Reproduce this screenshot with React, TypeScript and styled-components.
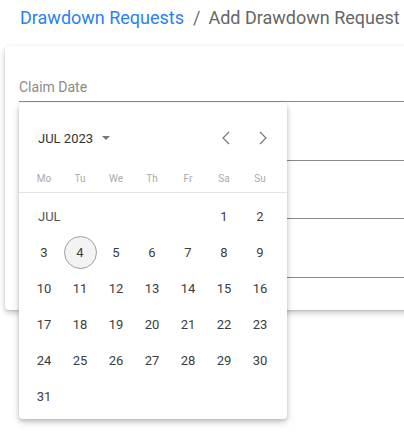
import React from 'react'
import styled, { createGlobalStyle } from 'styled-components'

const GlobalStyle = createGlobalStyle`
  html, body {
    margin: 0;
    padding: 0;
    background: #fff;
    overflow: hidden;
    font-family: Roboto, "Liberation Sans", sans-serif;
  }
`

const WEEKDAYS = ['Mo', 'Tu', 'We', 'Th', 'Fr', 'Sa', 'Su']

// July 2023 starts on a Saturday, so the month label fills Mo–Fr of week one
const DAYS = Array.from({ length: 31 }, (_, i) => i + 1)

function Chevron({ dir }: { dir: 'left' | 'right' }) {
  return (
    <svg width="8" height="14" viewBox="0 0 8 14">
      <polyline
        points={dir === 'left' ? '7,1 1,7 7,13' : '1,1 7,7 1,13'}
        fill="none"
        stroke="#777"
        strokeWidth="1.2"
      />
    </svg>
  )
}

function App() {
  return (
    <Page>
      <GlobalStyle />
      <Breadcrumb>
        <Crumb>Drawdown Requests</Crumb>
        <Sep>/</Sep>
        <Current>Add Drawdown Request</Current>
      </Breadcrumb>

      <Card>
        <Fields>
          <Field>
            <Label>Claim Date</Label>
          </Field>
          <Field />
          <Field />
          <Field />
        </Fields>

        <Picker>
          <PickerHeader>
            <MonthSwitch>
              JUL 2023
              <Caret />
            </MonthSwitch>
            <Nav>
              <NavButton>
                <Chevron dir="left" />
              </NavButton>
              <NavButton>
                <Chevron dir="right" />
              </NavButton>
            </Nav>
          </PickerHeader>

          <WeekRow>
            {WEEKDAYS.map((w) => (
              <WeekDay key={w}>{w}</WeekDay>
            ))}
          </WeekRow>

          <DayGrid>
            <MonthLabel>JUL</MonthLabel>
            {DAYS.map((d) => (
              <DayCell key={d}>
                <Day selected={d === 4}>{d}</Day>
              </DayCell>
            ))}
          </DayGrid>
        </Picker>
      </Card>
    </Page>
  )
}

const Page = styled.div`
  width: 404px;
  height: 435px;
  overflow: hidden;
`

const Breadcrumb = styled.div`
  display: flex;
  align-items: baseline;
  padding: 6px 0 0 20px;
  font-size: 18px;
  line-height: 24px;
  white-space: nowrap;
`

const Crumb = styled.span`
  color: #2b7ff5;
`

const Sep = styled.span`
  color: #707070;
  margin: 0 8px 0 9px;
`

const Current = styled.span`
  color: #666;
`

const Card = styled.div`
  position: relative;
  margin: 16px 0 0 5px;
  width: 600px;
  box-sizing: border-box;
  padding: 16px 0 32px 14px;
  background: #fff;
  border-radius: 4px;
  box-shadow: 0 3px 6px rgba(0, 0, 0, 0.2), 0 1px 3px rgba(0, 0, 0, 0.12);
`

const Fields = styled.div`
  display: flex;
  flex-direction: column;
  gap: 18.7px;
`

const Field = styled.div`
  height: 40px;
  box-sizing: border-box;
  display: flex;
  align-items: flex-end;
  padding-bottom: 6px;
  border-bottom: 1px solid #8a8a8a;
`

const Label = styled.span`
  font-size: 14px;
  line-height: 16px;
  color: #8a8a8a;
`

const Picker = styled.div`
  position: absolute;
  left: 14px;
  top: 57px;
  width: 268px;
  height: 316px;
  box-sizing: border-box;
  background: #fff;
  border-radius: 4px;
  box-shadow: 0 2px 4px rgba(0, 0, 0, 0.2), 0 4px 10px rgba(0, 0, 0, 0.12);
  padding-top: 17px;
`

const PickerHeader = styled.div`
  display: flex;
  align-items: center;
  justify-content: space-between;
  height: 36px;
  padding: 0 6px 0 19px;
`

const MonthSwitch = styled.div`
  display: flex;
  align-items: center;
  font-size: 13px;
  color: #333;
`

const Caret = styled.span`
  width: 0;
  height: 0;
  margin-left: 9px;
  border-left: 4px solid transparent;
  border-right: 4px solid transparent;
  border-top: 4px solid #777;
`

const Nav = styled.div`
  display: flex;
`

const NavButton = styled.div`
  width: 37px;
  height: 36px;
  display: flex;
  align-items: center;
  justify-content: center;
`

const WeekRow = styled.div`
  display: grid;
  grid-template-columns: repeat(7, 36px);
  height: 28px;
  margin-top: 8px;
  padding: 0 7px;
  align-items: center;
  border-bottom: 1px solid #e2e2e2;
`

const WeekDay = styled.div`
  text-align: center;
  font-size: 10px;
  color: #aaa;
`

const DayGrid = styled.div`
  display: grid;
  grid-template-columns: repeat(7, 36px);
  grid-auto-rows: 36px;
  padding: 5px 7px 0;
`

const MonthLabel = styled.div`
  grid-column: span 5;
  display: flex;
  align-items: center;
  padding-left: 12px;
  font-size: 13px;
  color: #555;
`

const DayCell = styled.div`
  display: flex;
  align-items: center;
  justify-content: center;
`

const Day = styled.div<{ selected?: boolean }>`
  width: 33px;
  height: 33px;
  box-sizing: border-box;
  border-radius: 50%;
  display: flex;
  align-items: center;
  justify-content: center;
  font-size: 13px;
  color: #3c3c3c;
  background: ${({ selected }) => (selected ? '#f3f3f3' : 'transparent')};
  border: 1px solid ${({ selected }) => (selected ? '#9e9e9e' : 'transparent')};
`

export default App
